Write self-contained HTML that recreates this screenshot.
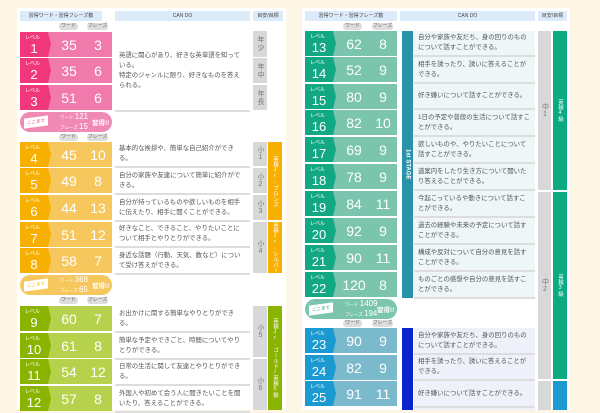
<!DOCTYPE html><html><head><meta charset="utf-8"><style>
body{margin:0;width:600px;height:410px;background:#fdf6e4;position:relative;overflow:hidden;font-family:"Liberation Sans","Noto Sans CJK JP",sans-serif}
.a{position:absolute}
.card{position:absolute;background:#fff}
.h{position:absolute;background:#dcebfa;font-size:5px;color:#444;text-align:center;line-height:10px;height:10px;top:11px}
.pill{position:absolute;background:#ddd;color:#666;font-size:5px;border-radius:3px;height:7px;line-height:7px;text-align:center}
.r{position:absolute;width:92px;height:25px;color:#fff}
.r .t{position:absolute;left:0;top:0;width:31px;height:25px;clip-path:polygon(0 0,28px 0,31px 50%,28px 100%,0 100%)}
.r .l{position:absolute;left:5px;top:2px;font-size:5px}
.r .n{position:absolute;left:3px;top:9px;font-size:13px;width:22px;text-align:center}
.r .w,.r .p{position:absolute;top:5px;font-size:14px;width:30px;text-align:center;margin-left:-15px}
.r .w{left:49px}.r .p{left:78px}
.cd{position:absolute;font-size:6.4px;color:#555;line-height:10px;display:flex;align-items:center;border-bottom:2px solid #ddd;box-sizing:border-box;padding-left:4px;padding-right:4px}
.ag{position:absolute;background:#d8d8d8;color:#777;font-size:7px;text-align:center;display:flex;align-items:center;justify-content:center;writing-mode:vertical-rl;text-orientation:upright;letter-spacing:1px}
.vb{position:absolute;color:#fff;font-size:5.5px;display:flex;align-items:center;justify-content:center;writing-mode:vertical-rl;text-orientation:upright}
.st{text-orientation:mixed}
.bd{position:absolute;width:92px;height:20px;border-radius:10px;color:#fff}
.bd .f{position:absolute;left:4px;top:5px;width:24px;height:10px;background:#fff;font-size:4.5px;line-height:10px;text-align:center;transform:skewY(-8deg)}
.bd .x{position:absolute;left:40px;top:1px;font-size:4.5px;line-height:8.5px}
.bd .x b{font-size:8px;font-weight:normal}
.bd .g{position:absolute;left:72px;top:5px;font-size:6.5px;font-weight:bold}
</style></head><body>
<div class="card" style="left:17px;top:8px;width:269px;height:402px"></div>
<div class="card" style="left:302px;top:8px;width:268px;height:402px"></div>

<div class="h" style="left:20px;width:82px">習得ワード・習得フレーズ数</div>
<div class="h" style="left:115px;width:135px">CAN DO</div>
<div class="h" style="left:253px;width:30px">目安/目標</div>
<div class="pill" style="left:59px;top:23px;width:19px">ワード</div><div class="pill" style="left:87px;top:23px;width:21px">フレーズ</div>

<div class="r" style="left:20px;top:32px;background:#ef7aab"><div class="t" style="background:#f0377b"></div><span class="l">レベル</span><span class="n">1</span><span class="w">35</span><span class="p">3</span></div>
<div class="r" style="left:20px;top:58px;background:#ef7aab"><div class="t" style="background:#f0377b"></div><span class="l">レベル</span><span class="n">2</span><span class="w">35</span><span class="p">6</span></div>
<div class="r" style="left:20px;top:85px;background:#ef7aab"><div class="t" style="background:#f0377b"></div><span class="l">レベル</span><span class="n">3</span><span class="w">51</span><span class="p">6</span></div>
<div class="cd" style="left:115px;top:31px;width:135px;height:81px">英語に関心があり、好きな英単語を知っている。<br>特定のジャンルに限り、好きなものを答えられる。</div>
<div class="ag" style="left:253px;top:31px;width:14px;height:26px">年少</div>
<div class="ag" style="left:253px;top:58px;width:14px;height:25px">年中</div>
<div class="ag" style="left:253px;top:85px;width:14px;height:25px">年長</div>
<div class="bd" style="left:20px;top:112px;background:#f08ab5"><div class="f" style="color:#f0377b">ここまで</div><div class="x">ワード <b>121</b><br>フレーズ <b>15</b></div><div class="g">習得!!</div></div>
<div class="pill" style="left:59px;top:134px;width:19px">ワード</div><div class="pill" style="left:87px;top:134px;width:21px">フレーズ</div>

<div class="r" style="left:20px;top:142px;background:#f6c75c"><div class="t" style="background:#f8b000"></div><span class="l">レベル</span><span class="n">4</span><span class="w">45</span><span class="p">10</span></div>
<div class="r" style="left:20px;top:168px;background:#f6c75c"><div class="t" style="background:#f8b000"></div><span class="l">レベル</span><span class="n">5</span><span class="w">49</span><span class="p">8</span></div>
<div class="r" style="left:20px;top:195px;background:#f6c75c"><div class="t" style="background:#f8b000"></div><span class="l">レベル</span><span class="n">6</span><span class="w">44</span><span class="p">13</span></div>
<div class="r" style="left:20px;top:222px;background:#f6c75c"><div class="t" style="background:#f8b000"></div><span class="l">レベル</span><span class="n">7</span><span class="w">51</span><span class="p">12</span></div>
<div class="r" style="left:20px;top:248px;background:#f6c75c"><div class="t" style="background:#f8b000"></div><span class="l">レベル</span><span class="n">8</span><span class="w">58</span><span class="p">7</span></div>
<div class="cd" style="left:115px;top:141px;width:135px;height:27px">基本的な挨拶や、簡単な自己紹介ができる。</div>
<div class="cd" style="left:115px;top:168px;width:135px;height:27px">自分の家族や友達について簡単に紹介ができる。</div>
<div class="cd" style="left:115px;top:195px;width:135px;height:27px">自分が持っているものや欲しいものを相手に伝えたり、相手に聞くことができる。</div>
<div class="cd" style="left:115px;top:222px;width:135px;height:26px">好きなこと、できること、やりたいことについて相手とやりとりができる。</div>
<div class="cd" style="left:115px;top:248px;width:135px;height:27px">身近な話題（行動、天気、数など）について受け答えができる。</div>
<div class="ag" style="left:253px;top:142px;width:14px;height:24px">小1</div>
<div class="ag" style="left:253px;top:168px;width:14px;height:25px">小2</div>
<div class="ag" style="left:253px;top:195px;width:14px;height:25px">小3</div>
<div class="ag" style="left:253px;top:222px;width:14px;height:51px">小4</div>
<div class="vb" style="left:268px;top:142px;width:14px;height:78px;background:#f8b000">英検Jr.ブロンズ</div>
<div class="vb" style="left:268px;top:222px;width:14px;height:51px;background:#f8b000">英検Jr.シルバー</div>
<div class="bd" style="left:20px;top:275px;background:#f6c75c"><div class="f" style="color:#f8b000">ここまで</div><div class="x">ワード <b>368</b><br>フレーズ <b>65</b></div><div class="g">習得!!</div></div>
<div class="pill" style="left:59px;top:297px;width:19px">ワード</div><div class="pill" style="left:87px;top:297px;width:21px">フレーズ</div>

<div class="r" style="left:20px;top:306px;background:#b6d24d"><div class="t" style="background:#8ab400"></div><span class="l">レベル</span><span class="n">9</span><span class="w">60</span><span class="p">7</span></div>
<div class="r" style="left:20px;top:333px;background:#b6d24d"><div class="t" style="background:#8ab400"></div><span class="l">レベル</span><span class="n">10</span><span class="w">61</span><span class="p">8</span></div>
<div class="r" style="left:20px;top:359px;background:#b6d24d"><div class="t" style="background:#8ab400"></div><span class="l">レベル</span><span class="n">11</span><span class="w">54</span><span class="p">12</span></div>
<div class="r" style="left:20px;top:386px;background:#b6d24d"><div class="t" style="background:#8ab400"></div><span class="l">レベル</span><span class="n">12</span><span class="w">57</span><span class="p">8</span></div>
<div class="cd" style="left:115px;top:306px;width:135px;height:27px">お出かけに関する簡単なやりとりができる。</div>
<div class="cd" style="left:115px;top:333px;width:135px;height:27px">簡単な予定やできごと、時間についてやりとりができる。</div>
<div class="cd" style="left:115px;top:360px;width:135px;height:26px">日常の生活に関して友達とやりとりができる。</div>
<div class="cd" style="left:115px;top:386px;width:135px;height:27px">外国人や初めて会う人に聞きたいことを聞いたり、答えることができる。</div>
<div class="ag" style="left:253px;top:306px;width:14px;height:51px">小5</div>
<div class="ag" style="left:253px;top:359px;width:14px;height:51px">小6</div>
<div class="vb" style="left:268px;top:306px;width:14px;height:104px;background:#8ab400">英検Jr.ゴールド/英検5級</div>

<div class="h" style="left:305px;width:92px">習得ワード・習得フレーズ数</div>
<div class="h" style="left:400px;width:135px">CAN DO</div>
<div class="h" style="left:538px;width:29px">目安/目標</div>
<div class="pill" style="left:343px;top:23px;width:19px">ワード</div><div class="pill" style="left:372px;top:23px;width:21px">フレーズ</div>

<div class="r" style="left:305px;top:31px;background:#7bc4ad"><div class="t" style="background:#13a884"></div><span class="l">レベル</span><span class="n">13</span><span class="w">62</span><span class="p">8</span></div>
<div class="r" style="left:305px;top:57px;background:#7bc4ad"><div class="t" style="background:#13a884"></div><span class="l">レベル</span><span class="n">14</span><span class="w">52</span><span class="p">9</span></div>
<div class="r" style="left:305px;top:84px;background:#7bc4ad"><div class="t" style="background:#13a884"></div><span class="l">レベル</span><span class="n">15</span><span class="w">80</span><span class="p">9</span></div>
<div class="r" style="left:305px;top:110px;background:#7bc4ad"><div class="t" style="background:#13a884"></div><span class="l">レベル</span><span class="n">16</span><span class="w">82</span><span class="p">10</span></div>
<div class="r" style="left:305px;top:137px;background:#7bc4ad"><div class="t" style="background:#13a884"></div><span class="l">レベル</span><span class="n">17</span><span class="w">69</span><span class="p">9</span></div>
<div class="r" style="left:305px;top:164px;background:#7bc4ad"><div class="t" style="background:#13a884"></div><span class="l">レベル</span><span class="n">18</span><span class="w">78</span><span class="p">9</span></div>
<div class="r" style="left:305px;top:191px;background:#7bc4ad"><div class="t" style="background:#13a884"></div><span class="l">レベル</span><span class="n">19</span><span class="w">84</span><span class="p">11</span></div>
<div class="r" style="left:305px;top:218px;background:#7bc4ad"><div class="t" style="background:#13a884"></div><span class="l">レベル</span><span class="n">20</span><span class="w">92</span><span class="p">9</span></div>
<div class="r" style="left:305px;top:245px;background:#7bc4ad"><div class="t" style="background:#13a884"></div><span class="l">レベル</span><span class="n">21</span><span class="w">90</span><span class="p">11</span></div>
<div class="r" style="left:305px;top:272px;background:#7bc4ad"><div class="t" style="background:#13a884"></div><span class="l">レベル</span><span class="n">22</span><span class="w">120</span><span class="p">8</span></div>
<div class="vb st" style="left:402px;top:31px;width:11px;height:267px;background:#2892a8;font-weight:bold;font-size:6px">1st STAGE</div>
<div class="a" style="left:414px;top:31px;width:121px;height:267px;background:#eef6f8"></div>
<div class="cd" style="left:414px;top:31px;width:121px;height:26px">自分や家族や友だち、身の回りのものについて話すことができる。</div>
<div class="cd" style="left:414px;top:57px;width:121px;height:27px">相手を誘ったり、誘いに答えることができる。</div>
<div class="cd" style="left:414px;top:84px;width:121px;height:26px">好き嫌いについて話すことができる。</div>
<div class="cd" style="left:414px;top:110px;width:121px;height:27px">1日の予定や普段の生活について話すことができる。</div>
<div class="cd" style="left:414px;top:137px;width:121px;height:27px">欲しいものや、やりたいことについて話すことができる。</div>
<div class="cd" style="left:414px;top:164px;width:121px;height:27px">道案内をしたり生き方について聞いたり答えることができる。</div>
<div class="cd" style="left:414px;top:191px;width:121px;height:27px">今起こっているや動きについて話すことができる。</div>
<div class="cd" style="left:414px;top:218px;width:121px;height:27px">過去の経験や未来の予定について話すことができる。</div>
<div class="cd" style="left:414px;top:245px;width:121px;height:27px">構成や反対について自分の意見を話すことができる。</div>
<div class="cd" style="left:414px;top:272px;width:121px;height:27px">ものごとの感想や自分の意見を話すことができる。</div>
<div class="ag" style="left:538px;top:31px;width:13px;height:159px">中1</div>
<div class="ag" style="left:538px;top:192px;width:13px;height:187px">中2</div>
<div class="ag" style="left:538px;top:381px;width:13px;height:29px"></div>
<div class="vb" style="left:553px;top:31px;width:14px;height:159px;background:#0aaa82">英検4級</div>
<div class="vb" style="left:553px;top:192px;width:14px;height:187px;background:#0aaa82">英検3級</div>
<div class="a" style="left:553px;top:381px;width:14px;height:29px;background:#1a9ad0"></div>
<div class="bd" style="left:305px;top:299px;background:#7bc4ad"><div class="f" style="color:#13a884">ここまで</div><div class="x">ワード <b>1409</b><br>フレーズ <b>194</b></div><div class="g">習得!!</div></div>
<div class="pill" style="left:343px;top:320px;width:19px">ワード</div><div class="pill" style="left:372px;top:320px;width:21px">フレーズ</div>

<div class="r" style="left:305px;top:328px;background:#7bb9cc"><div class="t" style="background:#1a9ad0"></div><span class="l">レベル</span><span class="n">23</span><span class="w">90</span><span class="p">9</span></div>
<div class="r" style="left:305px;top:355px;background:#7bb9cc"><div class="t" style="background:#1a9ad0"></div><span class="l">レベル</span><span class="n">24</span><span class="w">82</span><span class="p">9</span></div>
<div class="r" style="left:305px;top:381px;background:#7bb9cc"><div class="t" style="background:#1a9ad0"></div><span class="l">レベル</span><span class="n">25</span><span class="w">91</span><span class="p">11</span></div>
<div class="a" style="left:402px;top:328px;width:11px;height:82px;background:#0a24cc"></div>
<div class="a" style="left:414px;top:328px;width:121px;height:82px;background:#eff1fa"></div>
<div class="cd" style="left:414px;top:328px;width:121px;height:27px">自分や家族や友だち、身の回りのものについて話すことができる。</div>
<div class="cd" style="left:414px;top:355px;width:121px;height:26px">相手を誘ったり、誘いに答えることができる。</div>
<div class="cd" style="left:414px;top:381px;width:121px;height:27px">好き嫌いについて話すことができる。</div>
</body></html>
